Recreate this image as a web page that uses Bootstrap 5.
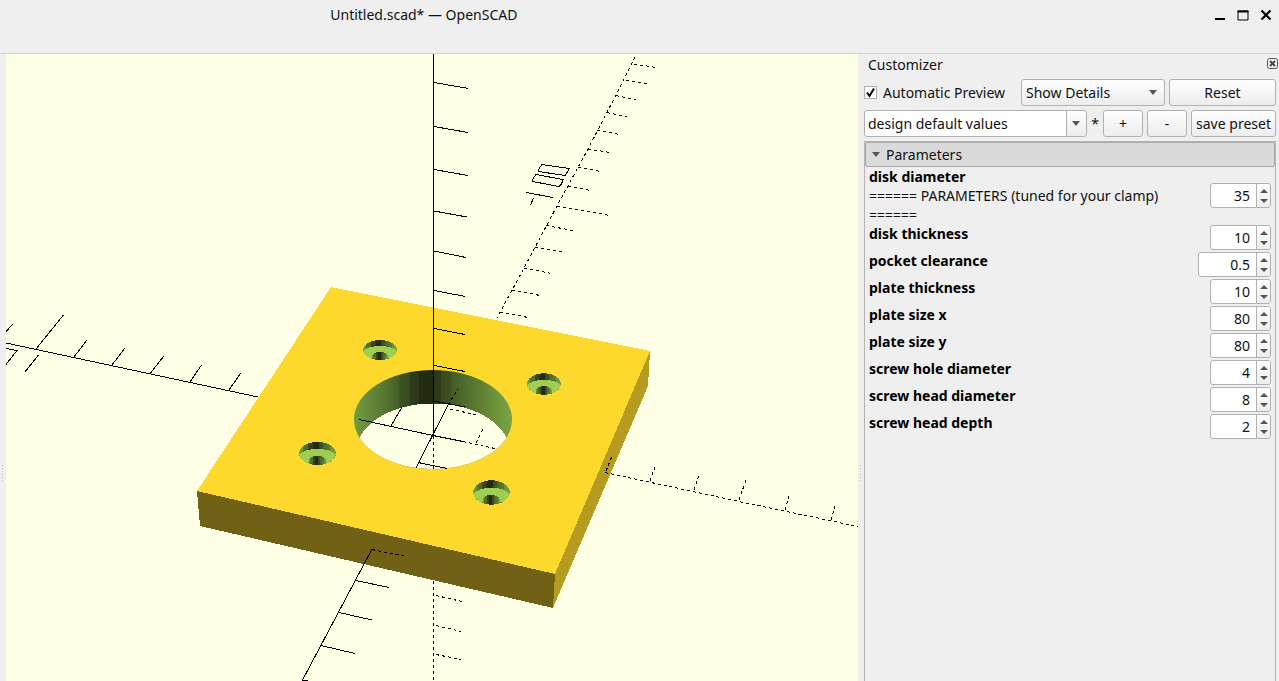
<!DOCTYPE html>
<html lang="en">
<head>
<meta charset="utf-8">
<meta name="viewport" content="width=device-width, initial-scale=1">
<title>Untitled.scad* — OpenSCAD</title>
<link href="https://cdn.jsdelivr.net/npm/bootstrap@5.3.0/dist/css/bootstrap.min.css" rel="stylesheet">
<style>
  body { background: #efefef; color: #111; font: 14px/19px "Noto Sans", "Open Sans", sans-serif; }
  .titlebar { height: 54px; border-bottom: 1px solid #d2d2d2; }
  .titlebar .caption { font-size: 14px; line-height: 30px; padding-right: 5px; }
  .win-btns { gap: 11px; padding: 8px 7px 0 0; }
  .win-btn { border: 0; background: none; padding: 0; width: 12px; height: 12px; display: block; }
  .win-btn svg { display: block; }
  .gutter { flex: 0 0 6px; }
  .gutter i { width: 1px; height: 17px; margin-top: 212px; margin-right: 1px; background: repeating-linear-gradient(#bbb 0 1px, transparent 1px 3px); }
  .viewport { background: #ffffe5; min-width: 0; }
  .viewport svg { display: block; width: 100%; height: 100%; shape-rendering: crispEdges; }
  .ln { fill: none; stroke: #000; stroke-width: 1; }
  .dash { stroke-dasharray: 3 3; }
  .dock { flex: 0 0 415px; min-width: 0; }
  .dock-title { height: 22px; padding: 0 0 2px 4px; }
  .tools { padding: 3px 3px 4px 0; gap: 4px; }
  .tools .auto { padding-left: 2px; }
  .ctl { height: 27px; border: 1px solid #b0b0b0; border-radius: 3px; background: linear-gradient(#fefefe, #ededed); color: #111; font-size: 14px; line-height: 19px; padding: 0 4px; min-width: 0; }
  .ctl-check { appearance: none; width: 13px; height: 13px; margin: 0; border: 1px solid #b0b0b0; border-radius: 0; background: #fff; }
  .ctl-check:checked { background: #fff url("data:image/svg+xml,%3Csvg xmlns='http://www.w3.org/2000/svg' viewBox='0 0 11 11'%3E%3Cpath d='M2 5.5 4.5 9 9 1.5' fill='none' stroke='black' stroke-width='2'/%3E%3C/svg%3E"); }
  select.ctl { appearance: none; background: url("data:image/svg+xml,%3Csvg xmlns='http://www.w3.org/2000/svg' width='8' height='5'%3E%3Cpath d='M0 0h8L4 5z' fill='%23555'/%3E%3C/svg%3E") no-repeat right 7px center, linear-gradient(#fefefe, #ededed); }
  select.combo { background: url("data:image/svg+xml,%3Csvg xmlns='http://www.w3.org/2000/svg' width='8' height='5'%3E%3Cpath d='M0 0h8L4 5z' fill='%23555'/%3E%3C/svg%3E") no-repeat right 6px center, linear-gradient(#b0b0b0, #b0b0b0) no-repeat right 19px top / 1px 100%, linear-gradient(#fefefe, #ededed) no-repeat right / 19px 100%, #fff; padding-left: 3px; }
  .details { width: 144px; }
  .reset { width: 107px; }
  .small-btn { width: 40px; }
  .save { width: 85px; padding: 0; white-space: nowrap; }
  .params { border: 1px solid #b4b4b4; border-bottom: 0; margin-right: 3px; }
  .group-head { height: 25px; width: 100%; border: 1px solid #a9a9a9; border-radius: 2px; background: #dadada; text-align: left; font-size: 14px; padding: 0 6px; gap: 6px; color: #111; }
  .param { min-height: 27px; padding: 0 4px; }
  .param label { max-width: 320px; }
  .param b { display: block; color: #000; }
  .spin { width: 61px; height: 25px; border: 1px solid #b0b0b0; border-radius: 3px; background: #fff; overflow: hidden; margin: 1px 0; }
  .spin.wide { width: 73px; }
  .spin input { appearance: textfield; -moz-appearance: textfield; flex: 1 1 0; min-width: 0; border: 0; padding: 0 6px 0 0; text-align: right; background: none; color: #111; font-size: 14px; line-height: 19px; }
  .spin input::-webkit-inner-spin-button { appearance: none; margin: 0; }
  .spin .steps { flex: 0 0 14px; border-left: 1px solid #b0b0b0; background: linear-gradient(#fefefe, #ededed); }
  .spin button { border: 0; background: none; padding: 0; height: 10px; display: flex; align-items: center; justify-content: center; }
</style>
</head>
<body class="vh-100 d-flex flex-column overflow-hidden">

<header class="titlebar flex-shrink-0">
  <div class="row g-0">
    <div class="col-8 text-center caption">Untitled.scad* — OpenSCAD</div>
    <div class="col-4 d-flex justify-content-end win-btns">
      <button class="win-btn" aria-label="Minimize"><svg width="12" height="14"><path d="M1 11h10" stroke="#000" stroke-width="2"/></svg></button>
      <button class="win-btn" aria-label="Maximize"><svg width="12" height="14"><path d="M1 3h10v9H1z" fill="none" stroke="#000"/><path d="M.5 3.500h11" stroke="#000" stroke-width="2"/></svg></button>
      <button class="win-btn" aria-label="Close"><svg width="12" height="14"><path d="M1.500 2.500l9 9M10.500 2.500l-9 9" stroke="#000" stroke-width="2.200"/></svg></button>
    </div>
  </div>
</header>

<main class="d-flex flex-fill overflow-hidden">
  <div class="gutter d-flex align-items-center justify-content-center"><i></i></div>

  <section class="viewport flex-fill" aria-label="3D view">
    <svg viewBox="6 54 852 627" preserveAspectRatio="xMidYMid slice" role="img" aria-label="Clamp plate preview">
      <defs>
        <linearGradient id="bore" x1="354" x2="513" y1="0" y2="0" gradientUnits="userSpaceOnUse">
          <stop offset="0" stop-color="#729d3e"/><stop offset=".1" stop-color="#65893a"/>
          <stop offset=".2" stop-color="#557530"/><stop offset=".28" stop-color="#465f29"/>
          <stop offset=".28" stop-color="#3f5325"/><stop offset=".35" stop-color="#39491f"/>
          <stop offset=".35" stop-color="#2f3c1b"/><stop offset=".41" stop-color="#2b3618"/>
          <stop offset=".41" stop-color="#222b12"/><stop offset=".5" stop-color="#222b12"/>
          <stop offset=".5" stop-color="#2c3918"/><stop offset=".55" stop-color="#2f3c1a"/>
          <stop offset=".55" stop-color="#39491f"/><stop offset=".61" stop-color="#3f5222"/>
          <stop offset=".61" stop-color="#455c25"/><stop offset=".7" stop-color="#506c2b"/>
          <stop offset=".8" stop-color="#607f33"/><stop offset=".9" stop-color="#70963b"/>
          <stop offset="1" stop-color="#7ba342"/>
        </linearGradient>
        <linearGradient id="sink">
          <stop offset="0" stop-color="#7aa340"/><stop offset=".1" stop-color="#6a9038"/>
          <stop offset=".1" stop-color="#55752f"/><stop offset=".24" stop-color="#4c682a"/>
          <stop offset=".24" stop-color="#39491f"/><stop offset=".38" stop-color="#313f1b"/>
          <stop offset=".38" stop-color="#222b12"/><stop offset=".54" stop-color="#222b12"/>
          <stop offset=".54" stop-color="#39491f"/><stop offset=".66" stop-color="#3f5222"/>
          <stop offset=".66" stop-color="#4c682a"/><stop offset=".84" stop-color="#5b7c30"/>
          <stop offset=".84" stop-color="#6a9038"/><stop offset="1" stop-color="#7aa340"/>
        </linearGradient>
        <clipPath id="boreClip"><ellipse cx="433" cy="419.500" rx="79" ry="49.500"/></clipPath>
        <!-- countersunk screw hole: wall, shoulder, through hole -->
        <g id="screw">
          <ellipse rx="17" ry="10" fill="url(#sink)"/>
          <path d="M-17 1C-14-2-8-4 0-4S14-2 17 1C16 6 9 10 0 10S-16 6-17 1z" fill="#a0ce52"/>
          <path d="M-8.500 8.500C-9 4-5 2 0 2S8.500 4 8.500 8.500C6 9.600 3 10 0 10S-6 9.600-8.500 8.500z" fill="url(#sink)"/>
        </g>
      </defs>

      <!-- plate -->
      <path d="M197 491 555 574 553 608 200 526z" fill="#716114"/>
      <path d="M650 351 648 386 553 608 555 574z" fill="#b59b1f"/>
      <path d="M331 287 650 351 555 574 197 491z" fill="#fcd92c"/>
      <g clip-path="url(#boreClip)">
        <rect x="353" y="369" width="161" height="102" fill="url(#bore)"/>
        <ellipse cx="433" cy="452" rx="77" ry="48.500" fill="#ffffe5"/>
      </g>
      <use href="#screw" transform="translate(380 350)"/>
      <use href="#screw" transform="translate(544 384) scale(1 1.070)"/>
      <use href="#screw" transform="translate(317.500 453.500) scale(1.080 1.150)"/>
      <use href="#screw" transform="translate(491.500 492.500) scale(1.080 1.220)"/>

      <!-- x axis -->
      <path class="ln" d="M6 343 258 397M36 349 63.500 315M74 357 86.500 340.500M112 365 124.500 348.500M150.500 373 163.500 356.500M190 382 201.500 365M229 390 240.500 373.500M6 331.500 13 324M6 348.500 17 350.500 6 364.500M24.500 372.500 38.500 355"/>
      <path class="ln" d="M359 419.500 433 435.500 463 441.500M391 426 402 407"/>
      <path class="ln dash" d="M463 441.500 497 449M476 443 484 427"/>
      <path class="ln dash" d="M605 472.500 739 501.500 858 526.500M606 471 612 456M650 481 656 464M694 490 699.500 474M739 500 746 480M785 510 790 493M831 520 836 503"/>

      <!-- y axis -->
      <path class="ln" d="M416 468 448 405M418 462.500 447 468.500M372 549 302 681M356 580.500 389 587.500M339 612.500 372 620M321 645.500 355 653.500M302 680 308 681"/>
      <path class="ln dash" d="M448 405 458 389M450 409 477 415M372 549.500 404 556"/>
      <path class="ln dash" d="M635 57 616 95 588 149 557 206 524 268 497 318M634 64 656 67.500M626 80 647.500 84M616 95.500 638 100.500M607 112.500 629 117.500M597.500 130.500 620 134.500M588 149 610 152.500M578 167 600 171.500M568 186 590 190.500M557.500 206 610 215.500M546 225.500 573 230.500M535 247 562 251.500M524 268 551 273.500M512.500 290 540 295.500M500.500 312 528 317.500"/>
      <path class="ln" d="M542 164.500 569 168.500 568 171 565 175.500 538.500 171.500 538.500 169.500zM536 174.500 563 179.500 561.500 184 559 186.500 532.500 181.500 532.500 179.500zM526 192.500 553 197.500M533.500 198 530.500 205"/>

      <!-- z axis -->
      <path class="ln" d="M433.500 54V435M434 82.500 468.500 88.500M434 126.500 468 132.500M434 169.500 468 175.500M434 211 467 217M434 251 466 257.500M434 290.500 465.500 296.500M434 328.500 465 334.500M434 365.500 465 371.500M434 401 465 407"/>
      <path class="ln dash" d="M433.500 436V469M433.500 581V681M436 595.500 462 601.500M436 625.500 461 631.500M436 654.500 461 659.500"/>
    </svg>
  </section>

  <div class="gutter d-flex align-items-center justify-content-center"><i></i></div>

  <aside class="dock d-flex flex-column">
    <div class="dock-title d-flex align-items-center justify-content-between">
      <span>Customizer</span>
      <button class="win-btn" aria-label="Close panel"><svg width="12" height="12"><rect x=".5" y=".5" width="10" height="10" rx="2" fill="none" stroke="#555"/><path d="M3 3l5 5M8 3 3 8" stroke="#444" stroke-width="1.800"/></svg></button>
    </div>

    <div class="tools d-flex align-items-center">
      <input class="ctl-check" type="checkbox" id="auto" checked>
      <label class="auto flex-fill text-nowrap" for="auto">Automatic Preview</label>
      <select class="ctl details" aria-label="Detail level"><option>Show Details</option></select>
      <button class="ctl reset">Reset</button>
    </div>
    <div class="tools d-flex align-items-center pt-0">
      <select class="ctl combo flex-fill" aria-label="Preset"><option>design default values</option></select>
      <span>*</span>
      <button class="ctl small-btn">+</button>
      <button class="ctl small-btn">-</button>
      <button class="ctl save">save preset</button>
    </div>

    <div class="params flex-fill">
      <button class="group-head d-flex align-items-center"><svg width="8" height="5"><path d="M0 0h8L4 5z" fill="#555"/></svg>Parameters</button>

      <div class="param d-flex justify-content-between align-items-center">
        <label for="p1"><b>disk diameter</b>====== PARAMETERS (tuned for your clamp) ======</label>
        <div class="spin d-flex"><input id="p1" type="number" value="35"><div class="steps d-flex flex-column justify-content-center"><button aria-label="Increase"><svg width="8" height="4"><path d="M0 4h8L4 0z" fill="#555"/></svg></button><button aria-label="Decrease"><svg width="8" height="4"><path d="M0 0h8L4 4z" fill="#555"/></svg></button></div></div>
      </div>
      <div class="param d-flex justify-content-between">
        <label for="p2"><b>disk thickness</b></label>
        <div class="spin d-flex"><input id="p2" type="number" value="10"><div class="steps d-flex flex-column justify-content-center"><button aria-label="Increase"><svg width="8" height="4"><path d="M0 4h8L4 0z" fill="#555"/></svg></button><button aria-label="Decrease"><svg width="8" height="4"><path d="M0 0h8L4 4z" fill="#555"/></svg></button></div></div>
      </div>
      <div class="param d-flex justify-content-between">
        <label for="p3"><b>pocket clearance</b></label>
        <div class="spin wide d-flex"><input id="p3" type="number" step="0.1" value="0.5"><div class="steps d-flex flex-column justify-content-center"><button aria-label="Increase"><svg width="8" height="4"><path d="M0 4h8L4 0z" fill="#555"/></svg></button><button aria-label="Decrease"><svg width="8" height="4"><path d="M0 0h8L4 4z" fill="#555"/></svg></button></div></div>
      </div>
      <div class="param d-flex justify-content-between">
        <label for="p4"><b>plate thickness</b></label>
        <div class="spin d-flex"><input id="p4" type="number" value="10"><div class="steps d-flex flex-column justify-content-center"><button aria-label="Increase"><svg width="8" height="4"><path d="M0 4h8L4 0z" fill="#555"/></svg></button><button aria-label="Decrease"><svg width="8" height="4"><path d="M0 0h8L4 4z" fill="#555"/></svg></button></div></div>
      </div>
      <div class="param d-flex justify-content-between">
        <label for="p5"><b>plate size x</b></label>
        <div class="spin d-flex"><input id="p5" type="number" value="80"><div class="steps d-flex flex-column justify-content-center"><button aria-label="Increase"><svg width="8" height="4"><path d="M0 4h8L4 0z" fill="#555"/></svg></button><button aria-label="Decrease"><svg width="8" height="4"><path d="M0 0h8L4 4z" fill="#555"/></svg></button></div></div>
      </div>
      <div class="param d-flex justify-content-between">
        <label for="p6"><b>plate size y</b></label>
        <div class="spin d-flex"><input id="p6" type="number" value="80"><div class="steps d-flex flex-column justify-content-center"><button aria-label="Increase"><svg width="8" height="4"><path d="M0 4h8L4 0z" fill="#555"/></svg></button><button aria-label="Decrease"><svg width="8" height="4"><path d="M0 0h8L4 4z" fill="#555"/></svg></button></div></div>
      </div>
      <div class="param d-flex justify-content-between">
        <label for="p7"><b>screw hole diameter</b></label>
        <div class="spin d-flex"><input id="p7" type="number" value="4"><div class="steps d-flex flex-column justify-content-center"><button aria-label="Increase"><svg width="8" height="4"><path d="M0 4h8L4 0z" fill="#555"/></svg></button><button aria-label="Decrease"><svg width="8" height="4"><path d="M0 0h8L4 4z" fill="#555"/></svg></button></div></div>
      </div>
      <div class="param d-flex justify-content-between">
        <label for="p8"><b>screw head diameter</b></label>
        <div class="spin d-flex"><input id="p8" type="number" value="8"><div class="steps d-flex flex-column justify-content-center"><button aria-label="Increase"><svg width="8" height="4"><path d="M0 4h8L4 0z" fill="#555"/></svg></button><button aria-label="Decrease"><svg width="8" height="4"><path d="M0 0h8L4 4z" fill="#555"/></svg></button></div></div>
      </div>
      <div class="param d-flex justify-content-between">
        <label for="p9"><b>screw head depth</b></label>
        <div class="spin d-flex"><input id="p9" type="number" value="2"><div class="steps d-flex flex-column justify-content-center"><button aria-label="Increase"><svg width="8" height="4"><path d="M0 4h8L4 0z" fill="#555"/></svg></button><button aria-label="Decrease"><svg width="8" height="4"><path d="M0 0h8L4 4z" fill="#555"/></svg></button></div></div>
      </div>
    </div>
  </aside>
</main>
<script src="https://cdn.jsdelivr.net/npm/bootstrap@5.3.0/dist/js/bootstrap.bundle.min.js"></script>
</body>
</html>
